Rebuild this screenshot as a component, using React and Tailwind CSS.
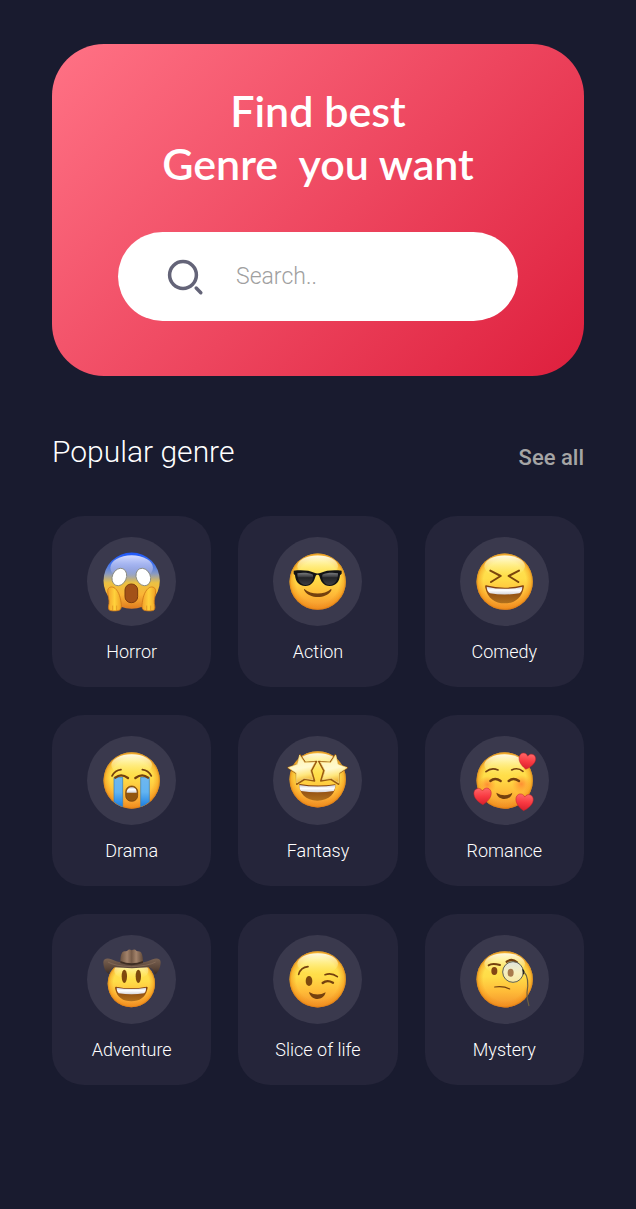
function Gradients() {
  return (
    <svg className="absolute size-0" aria-hidden="true">
      <defs>
        <linearGradient id="skin" x1="0" y1="0" x2="0" y2="1">
          <stop offset="0" stopColor="#ffe65a" />
          <stop offset="0.45" stopColor="#ffdd48" />
          <stop offset="0.72" stopColor="#ffbb38" />
          <stop offset="1" stopColor="#f2912b" />
        </linearGradient>
        <radialGradient id="rim" cx="0.5" cy="0.5" r="0.5">
          <stop offset="0.76" stopColor="#f08a14" stopOpacity="0" />
          <stop offset="0.93" stopColor="#ee8a12" stopOpacity="0.45" />
          <stop offset="1" stopColor="#d2700c" stopOpacity="0.8" />
        </radialGradient>
        <linearGradient id="shine" x1="0" y1="0" x2="0" y2="1">
          <stop offset="0" stopColor="#fffef0" stopOpacity="0.95" />
          <stop offset="1" stopColor="#fff27a" stopOpacity="0" />
        </linearGradient>
        <linearGradient id="fear" x1="0" y1="0" x2="0" y2="1">
          <stop offset="0" stopColor="#1f58fa" />
          <stop offset="0.2" stopColor="#3f73f2" />
          <stop offset="0.38" stopColor="#8a9ac0" />
          <stop offset="0.54" stopColor="#ecc142" />
          <stop offset="0.75" stopColor="#fbb535" />
          <stop offset="1" stopColor="#df7a1f" />
        </linearGradient>
        <linearGradient id="fearShine" x1="0" y1="0" x2="0" y2="1">
          <stop offset="0" stopColor="#d5dcff" />
          <stop offset="0.6" stopColor="#a9b2e6" stopOpacity="0.7" />
          <stop offset="1" stopColor="#a9b2d0" stopOpacity="0" />
        </linearGradient>
        <linearGradient id="hand" x1="0" y1="0" x2="1" y2="0">
          <stop offset="0" stopColor="#f3a02a" />
          <stop offset="0.5" stopColor="#ffd23c" />
          <stop offset="1" stopColor="#f0a024" />
        </linearGradient>
        <linearGradient id="mouth" x1="0" y1="0" x2="0" y2="1">
          <stop offset="0" stopColor="#7e3a0c" />
          <stop offset="1" stopColor="#b0701c" />
        </linearGradient>
        <linearGradient id="teeth" x1="0" y1="0" x2="0" y2="1">
          <stop offset="0" stopColor="#c9ccd4" />
          <stop offset="0.45" stopColor="#ffffff" />
          <stop offset="1" stopColor="#d5d5da" />
        </linearGradient>
        <linearGradient id="lens" x1="0" y1="0" x2="0" y2="1">
          <stop offset="0" stopColor="#77797b" />
          <stop offset="0.32" stopColor="#3c3d40" />
          <stop offset="0.4" stopColor="#222326" />
          <stop offset="1" stopColor="#3e3f42" />
        </linearGradient>
        <linearGradient id="tear" x1="0" y1="0" x2="0" y2="1">
          <stop offset="0" stopColor="#6fb7ee" />
          <stop offset="0.5" stopColor="#62b4f2" />
          <stop offset="1" stopColor="#1c7fe0" />
        </linearGradient>
        <linearGradient id="star" x1="0" y1="0" x2="0.2" y2="1">
          <stop offset="0" stopColor="#ffdc68" />
          <stop offset="0.3" stopColor="#fff6c0" />
          <stop offset="0.55" stopColor="#fff9cf" />
          <stop offset="0.8" stopColor="#ffe67c" />
          <stop offset="1" stopColor="#f2b838" />
        </linearGradient>
        <linearGradient id="heart" x1="0" y1="0" x2="0" y2="1">
          <stop offset="0" stopColor="#ff6868" />
          <stop offset="0.5" stopColor="#f93a42" />
          <stop offset="1" stopColor="#d81f2c" />
        </linearGradient>
        <radialGradient id="blush">
          <stop offset="0" stopColor="#ff7a2e" stopOpacity="0.75" />
          <stop offset="1" stopColor="#ff8a2e" stopOpacity="0" />
        </radialGradient>
        <linearGradient id="crown" x1="0" y1="0" x2="1" y2="0">
          <stop offset="0" stopColor="#6b5240" />
          <stop offset="0.3" stopColor="#a3836b" />
          <stop offset="0.5" stopColor="#755a47" />
          <stop offset="0.7" stopColor="#a3836b" />
          <stop offset="1" stopColor="#5f4838" />
        </linearGradient>
        <linearGradient id="brim" x1="0" y1="0" x2="0" y2="1">
          <stop offset="0" stopColor="#7a6252" />
          <stop offset="0.6" stopColor="#5a4538" />
          <stop offset="1" stopColor="#392a21" />
        </linearGradient>
        <linearGradient id="glass" x1="0" y1="0" x2="0" y2="1">
          <stop offset="0" stopColor="#dfe3dc" />
          <stop offset="0.5" stopColor="#f6efc0" />
          <stop offset="1" stopColor="#f7e7a0" />
        </linearGradient>
      </defs>
    </svg>
  );
}

function Face({ cx, cy, r = 84.5 }) {
  return (
    <g>
      <circle cx={cx} cy={cy} r={r} fill="url(#skin)" />
      <circle cx={cx} cy={cy} r={r} fill="url(#rim)" />
      <ellipse cx={cx} cy={cy - r * 0.55} rx={r * 0.72} ry={r * 0.38} fill="url(#shine)" />
    </g>
  );
}

function Emoji({ viewBox, children }) {
  return (
    <svg viewBox={viewBox} className="size-full" aria-hidden="true">
      {children}
    </svg>
  );
}

const brown = '#74400e';

function Scream() {
  return (
    <Emoji viewBox="127 81 267 267">
      <circle cx="261" cy="212" r="84.5" fill="url(#fear)" />
      <ellipse cx="261" cy="173" rx="64" ry="37" fill="url(#fearShine)" />
      <g fill="#fff" stroke="#85867c" strokeWidth="2.5">
        <ellipse cx="224" cy="201" rx="21" ry="27" transform="rotate(24 224 201)" />
        <ellipse cx="296" cy="201" rx="21" ry="27" transform="rotate(-24 296 201)" />
      </g>
      <rect x="241" y="222" width="38" height="56" rx="18" fill="#a35218" stroke="#7d3c0e" strokeWidth="3" />
      <g fill="url(#hand)" stroke="#cf7818" strokeWidth="2.5" strokeLinejoin="round">
        <path d="M189 242c1-12 14-14 22-7 13 11 17 31 19 49 1 11-2 17-12 18-8 1-17 1-23-1-5-3-4-12-2-20 2-11-4-24-4-39z" />
        <path d="M333 242c-1-12-14-14-22-7-13 11-17 31-19 49-1 11 2 17 12 18 8 1 17 1 23-1 5-3 4-12 2-20-2-11 4-24 4-39z" />
      </g>
      <g fill="none" stroke="#d98a1c" strokeWidth="2" strokeLinecap="round">
        <path d="M204 288v11M216 288v11M306 288v11M318 288v11" />
      </g>
    </Emoji>
  );
}

function Sunglasses() {
  return (
    <Emoji viewBox="117 81 267 267">
      <Face cx={251} cy={215} />
      <path d="M211 237c20 18 60 18 80 0 2 0 2 3 0 6-16 24-63 24-79 0-2-3-3-6-1-6z" fill={brown} />
      <path d="M179 182c24-3 47-1 62 6 6 3 13 3 20 0 15-7 38-9 62-6v9l-5 5c-2 18-10 32-31 32-19 0-26-13-31-30-2-5-9-5-11 0-5 17-12 30-31 30-21 0-29-14-31-32l-4-5z" fill="#121315" />
      <path d="M190 190c16-3 35-2 47 4 2 17-7 31-22 31-16 0-25-14-25-35z" fill="url(#lens)" />
      <path d="M312 190c-16-3-35-2-47 4-2 17 7 31 22 31 16 0 25-14 25-35z" fill="url(#lens)" />
    </Emoji>
  );
}

function Laughing() {
  return (
    <Emoji viewBox="122 81 267 267">
      <Face cx={256} cy={215} />
      <g fill="none" stroke="#7b460c" strokeWidth="6" strokeLinecap="round" strokeLinejoin="round">
        <path d="M213 182l31 16-29 18M299 182l-31 16 29 18" />
      </g>
      <path d="M200 226q56 14 111 0c3 0 3 3 2 7-6 32-28 47-57 47s-51-15-58-47c-1-5 0-7 2-7z" fill="url(#mouth)" />
      <path d="M202 230q54 13 107 0c0 9-3 16-9 20q-44 7-88 0c-6-4-10-11-10-20z" fill="url(#teeth)" />
    </Emoji>
  );
}

function Crying() {
  return (
    <Emoji viewBox="127 78 267 267">
      <Face cx={261} cy={211.5} />
      <path d="M208 202h26v88q-14-5-26-15zM288 202h26v73q-12 10-26 15z" fill="url(#tear)" stroke="#2f7fc4" strokeWidth="2" />
      <g fill="none" stroke={brown} strokeLinecap="round">
        <path d="M202 198q9-17 27-19M320 198q-9-17-27-19" strokeWidth="5" />
        <path d="M212 203q17-14 38 1M310 203q-17-14-38 1" strokeWidth="7" />
      </g>
      <rect x="243" y="228" width="36" height="46" rx="17" fill="#93560f" stroke="#6d390a" strokeWidth="2" />
      <path d="M246 248c-1-21 31-23 30 0z" fill="url(#teeth)" />
    </Emoji>
  );
}

function StarStruck() {
  return (
    <Emoji viewBox="117 78 267 267">
      <Face cx={251} cy={208} />
      <path d="M196 222q55 9 108 1c2 27-18 49-54 49-35 0-55-22-54-50z" fill="url(#mouth)" />
      <path d="M196 225q55 9 108 0c0 9-2 13-5 18q-49 8-98 0c-4-5-5-10-5-18z" fill="url(#teeth)" />
      <g fill="#9a5a10" stroke="#9a5a10" strokeWidth="4" strokeLinejoin="round">
        <path d="M198 134l16 23 34-3-15 28 9 31-30-5-24 15-1-33-25-17 28-10z" />
        <path d="M304 134l-16 23-34-3 15 28-9 31 30-5 24 15 1-33 25-17-28-10z" />
      </g>
      <g fill="url(#star)" stroke="#ffe88c" strokeWidth="2" strokeLinejoin="round">
        <path d="M197 135l15 23 31-2-14 26 8 27-27-4-22 14-1-30-24-16 27-10z" />
        <path d="M305 135l-15 23-31-2 14 26-8 27 27-4 22 14 1-30 24-16-27-10z" />
      </g>
    </Emoji>
  );
}

function Heart({ transform }) {
  return (
    <path
      d="M0 26C-10 20-25 9-26-7c-1-16 18-23 26-8 8-15 27-8 26 8C25 9 10 20 0 26z"
      fill="url(#heart)"
      stroke="#c42228"
      strokeWidth="1.5"
      transform={transform}
    />
  );
}

function Loving() {
  return (
    <Emoji viewBox="122 78 267 267">
      <Face cx={256} cy={211.5} />
      <circle cx="204" cy="224" r="26" fill="url(#blush)" />
      <circle cx="306" cy="222" r="28" fill="url(#blush)" />
      <g fill="none" stroke={brown} strokeLinecap="round">
        <path d="M200 185q16-14 36-5M277 180q18-9 34 4" strokeWidth="5" />
        <path d="M213 213q14-12 31 0M268 213q14-12 31 0" strokeWidth="7" />
      </g>
      <path d="M231 248q25 15 48 0c-4 25-44 25-48 0z" fill={brown} />
      <Heart transform="translate(323 153) rotate(8) scale(0.96)" />
      <Heart transform="translate(190 258) rotate(-2)" />
      <Heart transform="translate(315 276) rotate(5)" />
    </Emoji>
  );
}

function Cowboy() {
  return (
    <Emoji viewBox="127 80 267 267">
      <Face cx={260} cy={226} r={71} />
      <ellipse cx="239" cy="204" rx="8" ry="20" fill="#7d480d" />
      <ellipse cx="281" cy="204" rx="8" ry="20" fill="#7d480d" />
      <path d="M214 235q46 9 92 0c4 0 3 4 2 8-6 25-23 36-48 36s-42-11-48-36c-1-5-1-8 2-8z" fill="url(#mouth)" />
      <path d="M216 238q44 8 88 0c1 8-2 14-6 17q-37 6-76 0c-4-4-6-9-6-17z" fill="url(#teeth)" />
      <path d="M176 163c-1-12 12-15 24-10 15 7 27 12 62 12s47-5 62-12c12-5 25-2 24 10-1 16-9 32-18 36-1-12-7-19-18-22q-50 5-102 0c-11 3-16 10-17 20-10-5-16-19-17-34z" fill="url(#brim)" />
      <path d="M227 161c0-13 1-21 6-29 4-5 10-2 15-5 4-4 7-4 13-1 7-3 10-3 14 1 5 3 12 0 15 6 4 8 5 16 5 28-19 9-50 9-68 0z" fill="url(#crown)" />
      <path d="M227 158q34 14 68 0v6q-34 13-68 0z" fill="#3d2d23" />
      <path d="M190 161q19 12 70 14 51-2 73-14" fill="none" stroke="#8b715d" strokeWidth="3" opacity="0.7" />
    </Emoji>
  );
}

function Winking() {
  return (
    <Emoji viewBox="117 80 267 267">
      <Face cx={251} cy={213} />
      <ellipse cx="225" cy="218" rx="10" ry="15" fill="#7d480d" />
      <g fill="none" stroke={brown} strokeLinecap="round">
        <path d="M194 198q6-21 28-23M273 199q20-7 37 6" strokeWidth="5" />
        <path d="M266 224q13-11 31-1" strokeWidth="7" />
      </g>
      <path d="M225 251q25 15 50 1c-6 27-44 27-50-1z" fill={brown} />
    </Emoji>
  );
}

function Monocle() {
  return (
    <Emoji viewBox="122 80 267 267">
      <Face cx={256} cy={213} />
      <path d="M208 171q10-8 34-1" fill="none" stroke={brown} strokeWidth="6" strokeLinecap="round" />
      <ellipse cx="225" cy="188" rx="9" ry="12" fill="#834513" />
      <path d="M262 160q16-11 31 2" fill="none" stroke={brown} strokeWidth="7" strokeLinecap="round" />
      <circle cx="281" cy="191" r="31" fill="url(#glass)" stroke="#5d6056" strokeWidth="3" />
      <ellipse cx="274" cy="193" rx="9" ry="12" fill="#a87a4c" />
      <path d="M226 236q26-4 45 6" fill="none" stroke={brown} strokeWidth="3.5" strokeLinecap="round" />
      <path d="M309 181q6 2 7 10-1 6-5 8z" fill="#1e1e1e" />
      <path d="M314 191c16 16 12 44 9 62-1 17 2 27 6 40" fill="none" stroke="#6d6040" strokeWidth="3.5" />
    </Emoji>
  );
}

const genres = [
  { name: 'Horror', Icon: Scream },
  { name: 'Action', Icon: Sunglasses },
  { name: 'Comedy', Icon: Laughing },
  { name: 'Drama', Icon: Crying },
  { name: 'Fantasy', Icon: StarStruck },
  { name: 'Romance', Icon: Loving },
  { name: 'Adventure', Icon: Cowboy },
  { name: 'Slice of life', Icon: Winking },
  { name: 'Mystery', Icon: Monocle },
];

export default function App() {
  return (
    <main className="min-h-screen bg-[#191b2f] px-[52px] pt-11 pb-31 font-['Roboto',sans-serif] text-white">
      <Gradients />
      <section className="rounded-[52px] bg-linear-[135deg,#ff7285_0%,#de1f3d_100%] px-[66px] pt-10 pb-[55px]">
        <h1 className="text-center font-['Lato',sans-serif] text-[43px] leading-[53px] font-semibold whitespace-pre">
          Find best{'\n'}Genre  you want
        </h1>
        <div className="mt-[42px] flex h-[89px] items-center gap-8 rounded-full bg-white pr-10 pl-12">
          <label htmlFor="search" aria-label="Search genres" className="shrink-0">
            <svg viewBox="0 0 38 38" className="size-[38px]" fill="none" stroke="#646478" strokeWidth="3.5" strokeLinecap="round" aria-hidden="true">
              <circle cx="17" cy="17" r="13.4" />
              <path d="M30.2 30.1l4.6 4.6" />
            </svg>
          </label>
          <input
            id="search"
            type="search"
            placeholder="Search.."
            className="w-full min-w-0 bg-transparent text-[23px] leading-9 font-light text-gray-700 outline-none placeholder:text-[#a0a0a0]"
          />
        </div>
      </section>

      <section className="mt-14">
        <div className="flex items-end justify-between">
          <h2 className="text-[30px] leading-10 font-light">Popular genre</h2>
          <a href="#all" className="text-[22px] leading-7 font-medium text-[#a5a5a5]">See all</a>
        </div>
        <div className="mt-11 grid grid-cols-3 gap-x-[27px] gap-y-7">
          {genres.map(({ name, Icon }) => (
            <button key={name} type="button" className="flex h-[171px] flex-col items-center rounded-[32px] bg-[#25253a] pt-[21px]">
              <span className="size-[89px] rounded-full bg-[#3a394d]">
                <Icon />
              </span>
              <span className="mt-3 text-[18px] leading-7 font-light">{name}</span>
            </button>
          ))}
        </div>
      </section>
    </main>
  );
}
